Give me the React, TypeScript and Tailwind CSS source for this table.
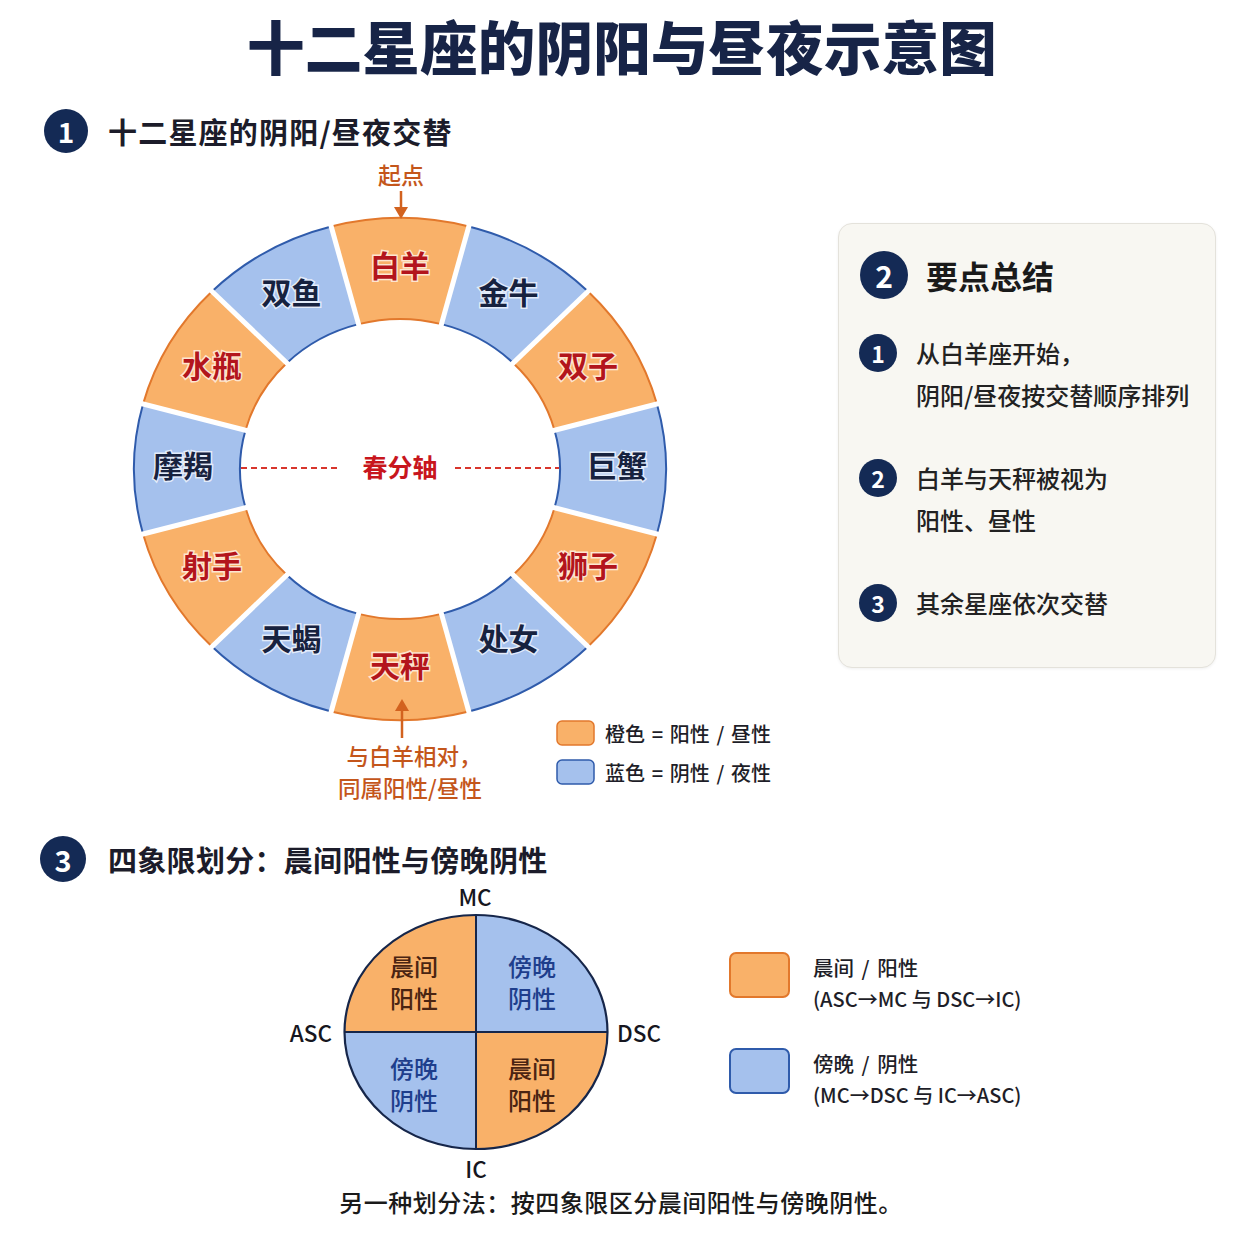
const font = { fontFamily: '"Noto Sans CJK SC", "Noto Sans", sans-serif' };

const signs = [
  { name: "白羊", yang: true },
  { name: "金牛", yang: false },
  { name: "双子", yang: true },
  { name: "巨蟹", yang: false },
  { name: "狮子", yang: true },
  { name: "处女", yang: false },
  { name: "天秤", yang: true },
  { name: "天蝎", yang: false },
  { name: "射手", yang: true },
  { name: "摩羯", yang: false },
  { name: "水瓶", yang: true },
  { name: "双鱼", yang: false },
];

// ring centre and radii (page coords, the svg viewBox uses them directly)
const CX = 400;
const CY = 469;
const OUT = { rx: 266, ry: 251 };
const IN = { rx: 160, ry: 150 };

const pt = (rx: number, ry: number, deg: number, cy = CY) => {
  const r = (deg * Math.PI) / 180;
  return [CX + rx * Math.sin(r), cy - ry * Math.cos(r)];
};

const segPath = (a0: number, a1: number) => {
  const [x0, y0] = pt(OUT.rx, OUT.ry, a0);
  const [x1, y1] = pt(OUT.rx, OUT.ry, a1);
  const [x2, y2] = pt(IN.rx, IN.ry, a1);
  const [x3, y3] = pt(IN.rx, IN.ry, a0);
  return `M${x0} ${y0} A${OUT.rx} ${OUT.ry} 0 0 1 ${x1} ${y1} L${x2} ${y2} A${IN.rx} ${IN.ry} 0 0 0 ${x3} ${y3} Z`;
};

const ORANGE = "#f9b169";
const ORANGE_LINE = "#e2782c";
const BLUE = "#a5c1ed";
const BLUE_LINE = "#2f5bab";

function Badge({ n, size }: { n: number; size: "lg" | "md" | "sm" }) {
  const cls =
    size === "lg"
      ? "w-[46px] h-[46px] text-[29px]"
      : size === "md"
        ? "w-[48px] h-[48px] text-[30px]"
        : "w-[38px] h-[38px] text-[23px]";
  return (
    <div
      className={`${cls} shrink-0 rounded-full bg-[#142a55] text-white font-bold flex items-center justify-center leading-none`}
    >
      {n}
    </div>
  );
}

function Ring() {
  return (
    <svg width={680} height={655} viewBox="120 155 680 655" className="shrink-0">
      {signs.map((s, i) => (
        <path
          key={s.name}
          d={segPath(i * 30 - 15, i * 30 + 15)}
          fill={s.yang ? ORANGE : BLUE}
          stroke={s.yang ? ORANGE_LINE : BLUE_LINE}
          strokeWidth={2}
        />
      ))}
      {signs.map((_, i) => {
        const a = i * 30 + 15;
        const [x0, y0] = pt(IN.rx - 6, IN.ry - 6, a);
        const [x1, y1] = pt(OUT.rx + 6, OUT.ry + 6, a);
        return <line key={i} x1={x0} y1={y0} x2={x1} y2={y1} stroke="#fff" strokeWidth={5} />;
      })}
      {signs.map((s, i) => {
        const [x, y] = pt(217, 200, i * 30, 464);
        return (
          <text
            key={s.name}
            x={x}
            y={y}
            textAnchor="middle"
            dominantBaseline="central"
            fontSize={30}
            fontWeight={700}
            fill={s.yang ? "#b3151c" : "#17223f"}
            stroke="#fff"
            strokeWidth={3}
            strokeOpacity={0.7}
            paintOrder="stroke"
            style={font}
          >
            {s.name}
          </text>
        );
      })}

      {/* spring equinox axis */}
      <line x1={241} y1={468} x2={340} y2={468} stroke="#d8352c" strokeWidth={1.8} strokeDasharray="6 4" />
      <line x1={455} y1={468} x2={559} y2={468} stroke="#d8352c" strokeWidth={1.8} strokeDasharray="6 4" />
      <text x={400} y={466} textAnchor="middle" dominantBaseline="central" fontSize={25} fontWeight={700} fill="#c8161d" style={font}>
        春分轴
      </text>

      {/* start marker */}
      <text x={401} y={174} textAnchor="middle" dominantBaseline="central" fontSize={23} fontWeight={500} fill="#c4561b" style={font}>
        起点
      </text>
      <line x1={401} y1={191} x2={401} y2={210} stroke="#d2621f" strokeWidth={2.5} />
      <polygon points="394,207 408,207 401,219" fill="#d2621f" />

      {/* opposite marker */}
      <polygon points="395,711 409,711 402,699" fill="#d2621f" />
      <line x1={402} y1={709} x2={402} y2={738} stroke="#d2621f" strokeWidth={2.5} />
      <text x={414} y={755} textAnchor="middle" dominantBaseline="central" fontSize={22.5} fontWeight={500} fill="#c4561b" style={font}>
        与白羊相对，
      </text>
      <text x={410} y={787} textAnchor="middle" dominantBaseline="central" fontSize={22.5} fontWeight={500} fill="#c4561b" style={font}>
        同属阳性/昼性
      </text>

      {/* legend */}
      <rect x={557} y={721} width={37} height={24} rx={5} fill={ORANGE} stroke={ORANGE_LINE} strokeWidth={1.5} />
      <rect x={557} y={760} width={37} height={24} rx={5} fill={BLUE} stroke={BLUE_LINE} strokeWidth={1.5} />
      <text x={605} y={733} dominantBaseline="central" fontSize={20} fontWeight={500} wordSpacing={2.2} fill="#1e1e28" style={font}>
        橙色 = 阳性 / 昼性
      </text>
      <text x={605} y={772} dominantBaseline="central" fontSize={20} fontWeight={500} wordSpacing={2.2} fill="#1e1e28" style={font}>
        蓝色 = 阴性 / 夜性
      </text>
    </svg>
  );
}

function Quadrants() {
  const qx = 476;
  const qy = 1032;
  const rx = 131.5;
  const ry = 117;
  const quad = (sx: number, sy: number) =>
    `M${qx} ${qy} L${qx + sx * rx} ${qy} A${rx} ${ry} 0 0 ${sx * sy > 0 ? 1 : 0} ${qx} ${qy + sy * ry} Z`;
  const label = (x: number, y: number, a: string, b: string, color: string) => (
    <g fill={color} fontSize={24} fontWeight={500} style={font} textAnchor="middle" dominantBaseline="central">
      <text x={x} y={y}>{a}</text>
      <text x={x} y={y + 32}>{b}</text>
    </g>
  );
  return (
    <svg width={430} height={312} viewBox="270 876 430 312" className="shrink-0">
      <path d={quad(-1, -1)} fill={ORANGE} />
      <path d={quad(1, -1)} fill={BLUE} />
      <path d={quad(-1, 1)} fill={BLUE} />
      <path d={quad(1, 1)} fill={ORANGE} />
      <ellipse cx={qx} cy={qy} rx={rx} ry={ry} fill="none" stroke="#16264a" strokeWidth={2.2} />
      <line x1={qx} y1={qy - ry} x2={qx} y2={qy + ry} stroke="#16264a" strokeWidth={2} />
      <line x1={qx - rx} y1={qy} x2={qx + rx} y2={qy} stroke="#16264a" strokeWidth={2} />
      {label(414, 965, "晨间", "阳性", "#4a2412")}
      {label(532, 965, "傍晚", "阴性", "#1e3e8c")}
      {label(414, 1067, "傍晚", "阴性", "#1e3e8c")}
      {label(532, 1067, "晨间", "阳性", "#4a2412")}
      <g fill="#161620" fontSize={22.5} fontWeight={500} style={font} dominantBaseline="central">
        <text x={475} y={896} textAnchor="middle">MC</text>
        <text x={476} y={1168} textAnchor="middle">IC</text>
        <text x={332} y={1032} textAnchor="end">ASC</text>
        <text x={617} y={1032}>DSC</text>
      </g>
    </svg>
  );
}

const points = [
  ["从白羊座开始，", "阴阳/昼夜按交替顺序排列"],
  ["白羊与天秤被视为", "阳性、昼性"],
  ["其余星座依次交替"],
];

export default function App() {
  return (
    <div className="w-[1254px] h-[1254px] bg-white text-[#1c1c2a] overflow-hidden" style={font}>
      <div className="h-[92px] flex items-center justify-center">
        <h1 className="text-[57.5px] leading-none font-black text-[#172447] tracking-[0.2px] -translate-x-[5px]">
          十二星座的阴阳与昼夜示意图
        </h1>
      </div>

      <div className="mt-[17px] h-[44px] flex items-center gap-[20px] pl-[44px]">
        <div className="w-[44px] h-[44px] rounded-full bg-[#142a55] text-white text-[28px] font-bold flex items-center justify-center leading-none">
          1
        </div>
        <div className="text-[29px] font-semibold leading-none tracking-[1.2px]">十二星座的阴阳/昼夜交替</div>
      </div>

      <div className="mt-[2px] flex items-start pl-[120px] gap-[38px]">
        <Ring />
        <div className="mt-[68px] w-[378px] h-[445px] rounded-[14px] border border-[#e4e2db] bg-[#f8f7f2] shadow-[0_1px_3px_rgba(0,0,0,0.06)] pl-[21px] pt-[27px]">
          <div className="flex items-center gap-[18px]">
            <Badge n={2} size="md" />
            <div className="text-[32px] font-bold leading-none text-[#1a1a1a]">要点总结</div>
          </div>
          <div className="mt-[33px] flex flex-col gap-[41px]">
            {points.map((lines, i) => (
              <div key={i} className="flex items-start gap-[19px]">
                <div className="mt-[2px] -ml-[1px]">
                  <Badge n={i + 1} size="sm" />
                </div>
                <div className="text-[24px] leading-[42px] font-medium text-[#222]">
                  {lines.map((l) => (
                    <div key={l}>{l}</div>
                  ))}
                </div>
              </div>
            ))}
          </div>
        </div>
      </div>

      <div className="mt-[26px] h-[46px] flex items-center gap-[22px] pl-[40px]">
        <Badge n={3} size="lg" />
        <div className="text-[29px] font-semibold leading-none tracking-[0.3px]">四象限划分：晨间阳性与傍晚阴性</div>
      </div>

      <div className="-mt-[6px] flex items-start pl-[270px] gap-[29px]">
        <Quadrants />
        <div className="mt-[75px] flex flex-col gap-[32px]">
          <div className="flex items-start gap-[23px]">
            <div className="w-[61px] h-[46px] rounded-[7px] bg-[#f9b169] border-2 border-[#e2782c] mt-[1px]" />
            <div className="text-[20.5px] leading-[32px] font-medium text-[#1e1e28]">
              <div className="[word-spacing:3px]">晨间 / 阳性</div>
              <div className="text-[20px]">(ASC→MC 与 DSC→IC)</div>
            </div>
          </div>
          <div className="flex items-start gap-[23px]">
            <div className="w-[61px] h-[46px] rounded-[7px] bg-[#a5c1ed] border-2 border-[#2f5bab] mt-[1px]" />
            <div className="text-[20.5px] leading-[32px] font-medium text-[#1e1e28]">
              <div className="[word-spacing:3px]">傍晚 / 阴性</div>
              <div className="text-[20px]">(MC→DSC 与 IC→ASC)</div>
            </div>
          </div>
        </div>
      </div>

      <div className="-mt-[1px] text-center text-[24px] leading-[30px] font-medium text-[#1a1a1a]">
        <span className="inline-block -translate-x-[6px] tracking-[0.5px]">另一种划分法：按四象限区分晨间阳性与傍晚阴性。</span>
      </div>
    </div>
  );
}
